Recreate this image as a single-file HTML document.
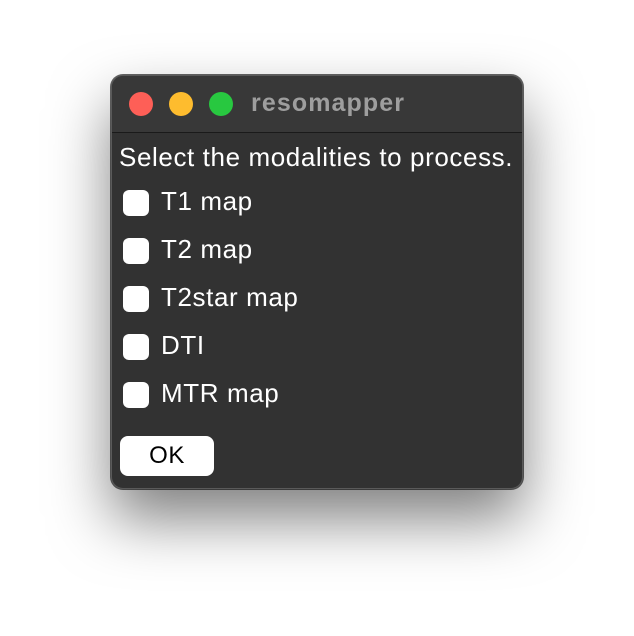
<!DOCTYPE html>
<html><head><style>
body{margin:0;width:634px;height:636px;background:#fff;position:relative;overflow:hidden;font-family:"Liberation Sans",sans-serif}
.win{position:absolute;left:111px;top:75px;width:410px;height:412px;background:#323232;border:1px solid #5a5a5a;border-radius:12px;box-shadow:0 30px 60px rgba(0,0,0,.5),0 0 0 1px rgba(0,0,0,.6);overflow:hidden}
.tb{position:absolute;left:0;top:0;right:0;height:56px;background:#383838;border-bottom:1px solid #1a1a1a}
.dot{position:absolute;top:16px;width:24px;height:24px;border-radius:50%}
.title{position:absolute;left:139px;top:13px;font-size:25px;font-weight:bold;color:#9e9e9e;letter-spacing:1.1px}
.t{position:absolute;color:#fff;font-size:26px;white-space:nowrap;letter-spacing:0.6px}
.cb{position:absolute;left:11px;width:26px;height:26px;background:#fff;border-radius:6px}
.ok{position:absolute;left:8px;top:360px;width:94px;height:40px;background:#fff;border-radius:8px;color:#000;font-size:24px;text-align:center;line-height:40px;letter-spacing:0.5px}
</style></head><body>
<div class="win">
<div class="tb">
<div class="dot" style="left:17px;background:#fe5f57"></div>
<div class="dot" style="left:57px;background:#febc2e"></div>
<div class="dot" style="left:97px;background:#28c840"></div>
<div class="title">resomapper</div>
</div>
<div class="t" style="left:7px;top:66px">Select the modalities to process.</div>
<div class="cb" style="top:114px"></div><div class="t" style="left:49px;top:110px">T1 map</div>
<div class="cb" style="top:162px"></div><div class="t" style="left:49px;top:158px">T2 map</div>
<div class="cb" style="top:210px"></div><div class="t" style="left:49px;top:206px">T2star map</div>
<div class="cb" style="top:258px"></div><div class="t" style="left:49px;top:254px">DTI</div>
<div class="cb" style="top:306px"></div><div class="t" style="left:49px;top:302px">MTR map</div>
<div class="ok">OK</div>
</div>
</body></html>
